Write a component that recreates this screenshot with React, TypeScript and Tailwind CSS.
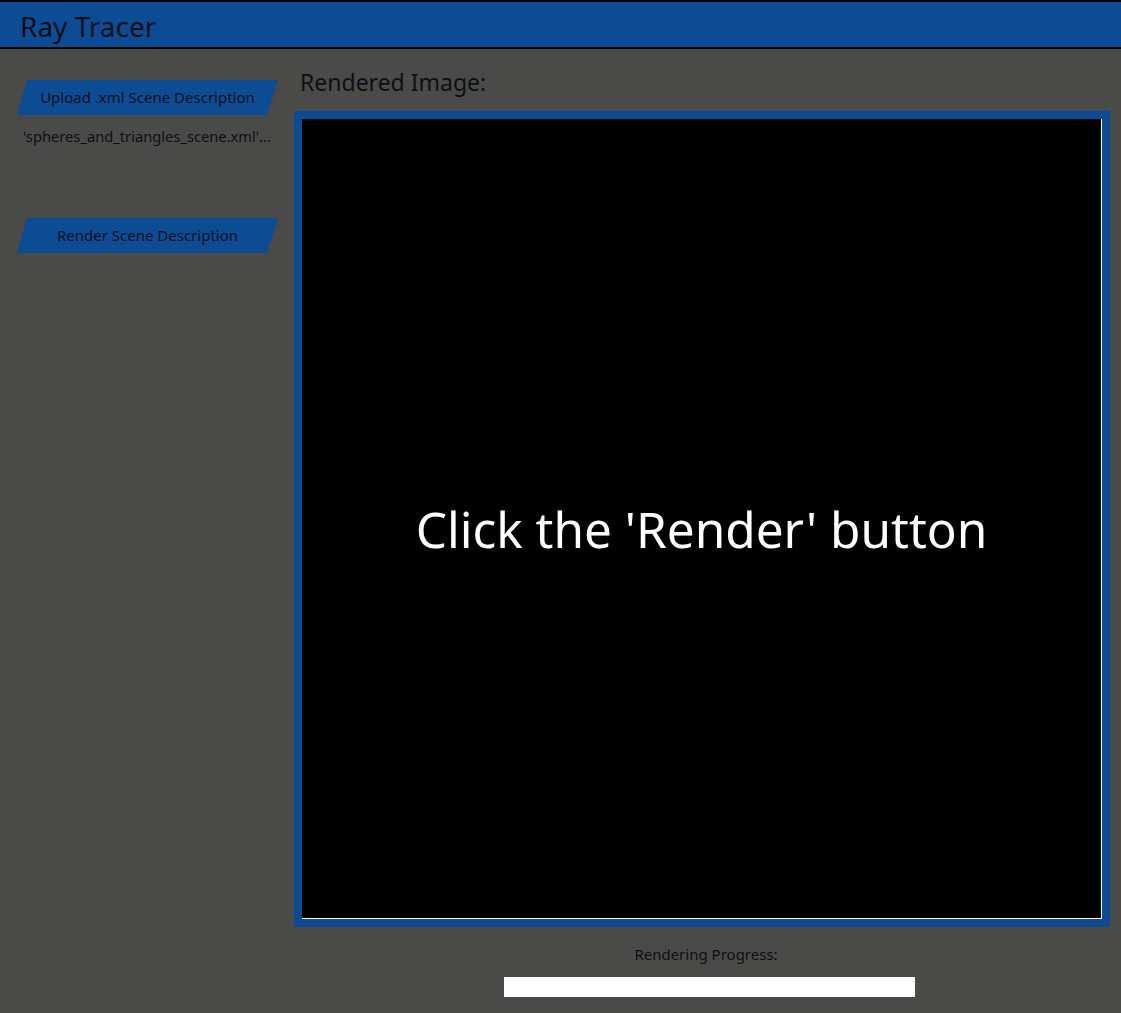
export default function App() {
  return (
    <div className="min-h-screen bg-[#4a4b48] font-['Noto_Sans',sans-serif] text-[#0e0f14]">
      <header className="h-[49px] bg-[#0c4c95] border-t-2 border-b-2 border-black flex items-center px-[20px]">
        <h1 className="text-[28px] leading-none pt-[2px]">Ray Tracer</h1>
      </header>

      <div className="flex">
        <aside className="w-[294px] shrink-0 pt-[31px] pl-[17px]">
          <button className="w-[261px] h-[35px] bg-[#0c4c95] text-[15px] [clip-path:polygon(10px_0,100%_0,calc(100%-11px)_100%,0_100%)]">
            Upload .xml Scene Description
          </button>
          <p className="mt-[10px] pl-[6px] text-[14.7px] leading-[22px] w-[260px] whitespace-nowrap">
            'spheres_and_triangles_scene.xml'...
          </p>
          <button className="mt-[71px] w-[261px] h-[35px] bg-[#0c4c95] text-[15px] [clip-path:polygon(10px_0,100%_0,calc(100%-11px)_100%,0_100%)]">
            Render Scene Description
          </button>
        </aside>

        <main className="w-[816px] shrink-0">
          <h2 className="pt-[18px] pl-[6px] text-[23px] leading-[30px]">Rendered Image:</h2>
          <div className="mt-[14px] border-[8px] border-[#0c4c95] w-[816px] h-[816px]">
            <div className="w-[800px] h-[800px] bg-black border-r border-b border-white flex items-center justify-center pt-[22px]">
              <span className="text-white text-[49.5px]">Click the 'Render' button</span>
            </div>
          </div>
          <div className="flex flex-col items-center pl-[8px]">
            <p className="mt-[17px] text-[15px] leading-[20px]">Rendering Progress:</p>
            <div className="mt-[13px] ml-[6px] w-[411px] h-[20px] bg-white" />
          </div>
        </main>
      </div>
    </div>
  );
}
